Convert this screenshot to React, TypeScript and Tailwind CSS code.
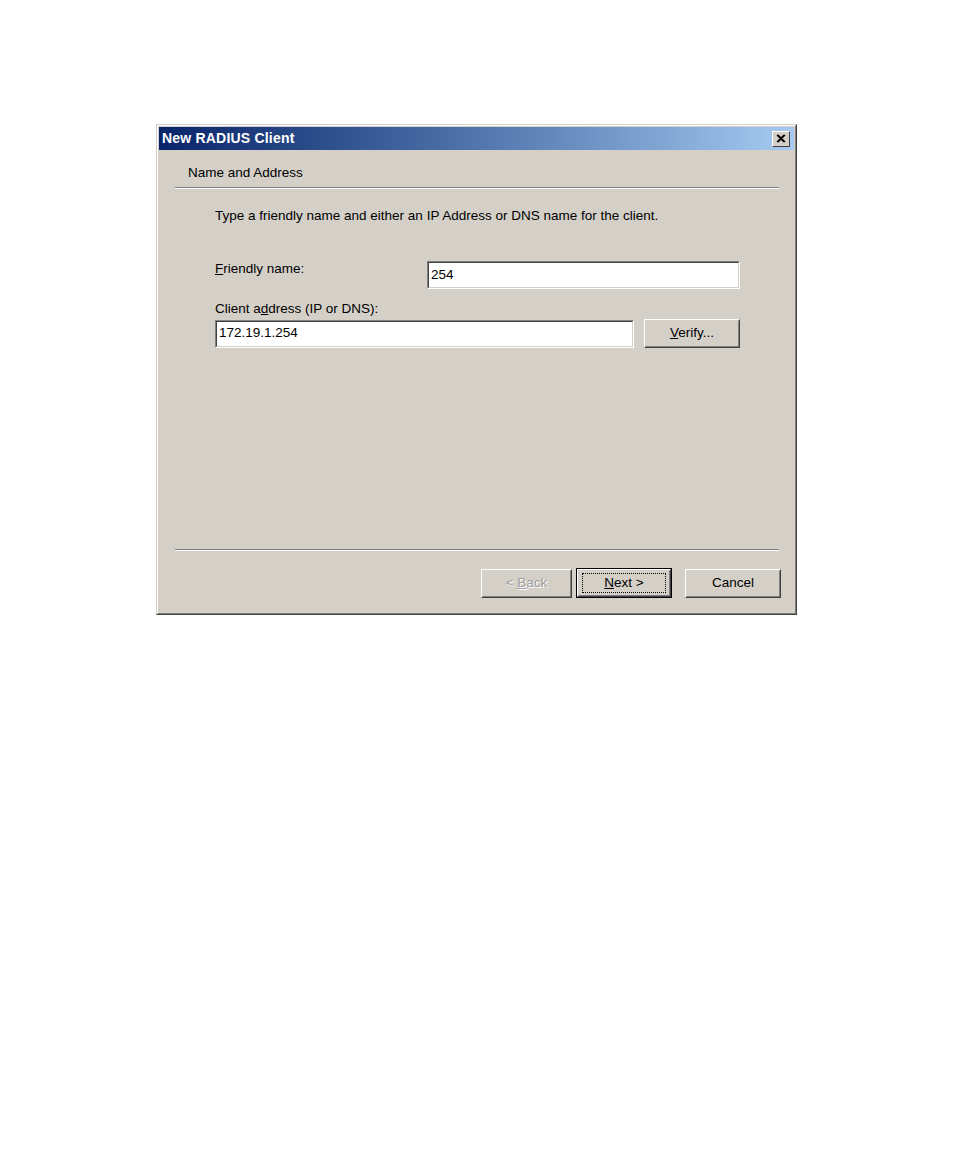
import React from "react";

const font = { fontFamily: '"Liberation Sans", Arial, sans-serif' };

function Sunken({ className, children }: { className: string; children?: React.ReactNode }) {
  return (
    <div className={`border border-t-[#808080] border-l-[#808080] border-b-white border-r-white ${className}`}>
      <div className="h-full w-full border border-t-[#404040] border-l-[#404040] border-b-[#d4d0c8] border-r-[#d4d0c8] bg-white flex items-center pl-[2px] text-[13.5px] text-black">
        {children}
      </div>
    </div>
  );
}

function Btn({ className, children, disabled, def }: { className: string; children: React.ReactNode; disabled?: boolean; def?: boolean }) {
  const inner = (
    <div className="h-full w-full border border-t-white border-l-white border-b-[#404040] border-r-[#404040]">
      <div className="h-full w-full border border-t-[#d4d0c8] border-l-[#d4d0c8] border-b-[#808080] border-r-[#808080] flex items-center justify-center">
        {def ? (
          <div className="h-[calc(100%-4px)] w-[calc(100%-6px)] border border-dotted border-black flex items-center justify-center text-[13.5px] text-black">
            {children}
          </div>
        ) : (
          <span className={`text-[13.5px] ${disabled ? "text-[#a0a0a0] [text-shadow:1px_1px_0_#ffffff]" : "text-black"}`}>{children}</span>
        )}
      </div>
    </div>
  );
  if (def) {
    return <div className={`border border-black ${className}`}>{inner}</div>;
  }
  return <div className={className}>{inner}</div>;
}

export default function App() {
  return (
    <div className="w-[954px] h-[1155px] bg-white pt-[124px] pl-[156px]" style={font}>
      <div className="w-[641px] h-[491px] border border-t-[#d4d0c8] border-l-[#d4d0c8] border-b-[#404040] border-r-[#404040]">
        <div className="h-full w-full border border-t-white border-l-white border-b-[#808080] border-r-[#808080] bg-[#d4d0c8] p-[1px] flex flex-col">
          {/* Title bar */}
          <div className="h-[23px] bg-gradient-to-r from-[#0a246a] to-[#a6caf0] flex items-center justify-between pl-[3px] pr-[4px]">
            <span className="text-white font-bold text-[14px] tracking-[0.2px]">New RADIUS Client</span>
            <div className="w-[18px] h-[16px] bg-[#d4d0c8] border border-t-white border-l-white border-b-[#404040] border-r-[#404040] flex items-center justify-center">
              <svg width="10" height="9" viewBox="0 0 10 9">
                <path d="M1 1 L8 8 M2 1 L9 8 M8 1 L1 8 M9 1 L2 8" stroke="#000" strokeWidth="1.3" />
              </svg>
            </div>
          </div>
          {/* Header */}
          <div className="h-[37px] flex items-center pl-[29px] pt-[10px]">
            <span className="text-[13.5px] text-black">Name and Address</span>
          </div>
          <div className="ml-[16px] mr-[15px] h-[2px] border-t border-t-[#808080] border-b border-b-white" />
          {/* Content */}
          <div className="flex flex-col pl-[56px] pr-[54px] pt-[18px]">
            <div className="text-[13.5px] text-black h-[18px] leading-[18px]">
              Type a friendly name and either an IP Address or DNS name for the client.
            </div>
            <div className="flex items-center justify-between mt-[36px]">
              <span className="text-[13.5px] text-black leading-[18px] -mt-[12px]">
                <span className="underline">F</span>riendly name:
              </span>
              <Sunken className="w-[313px] h-[28px]">254</Sunken>
            </div>
            <div className="text-[13.5px] text-black leading-[18px] mt-[11px]">
              Client a<span className="underline">d</span>dress (IP or DNS):
            </div>
            <div className="flex items-center justify-between mt-[1px]">
              <Sunken className="w-[419px] h-[28px]">172.19.1.254</Sunken>
              <Btn className="w-[96px] h-[29px]">
                <span className="underline">V</span>erify...
              </Btn>
            </div>
          </div>
          <div className="flex-1" />
          <div className="ml-[16px] mr-[15px] h-[2px] border-t border-t-[#808080] border-b border-b-white" />
          <div className="flex justify-end items-center pr-[13px] pt-[17px] pb-[14px]">
            <Btn className="w-[91px] h-[29px]" disabled>
              &lt; <span className="underline">B</span>ack
            </Btn>
            <Btn className="w-[96px] h-[30px] ml-[4px]" def>
              <span className="underline">N</span>ext &gt;
            </Btn>
            <Btn className="w-[96px] h-[29px] ml-[13px]">Cancel</Btn>
          </div>
        </div>
      </div>
    </div>
  );
}
